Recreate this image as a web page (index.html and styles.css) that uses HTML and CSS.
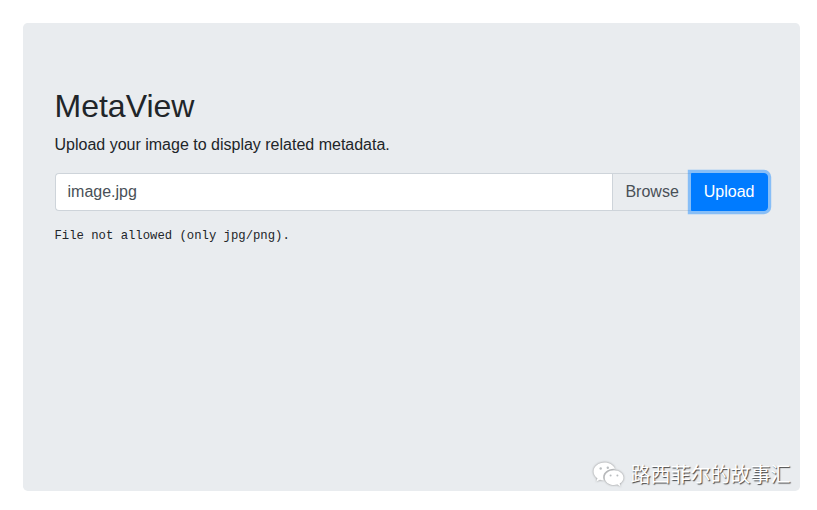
FILE: index.html
```html
<!DOCTYPE html>
<html lang="en">
<head>
  <meta charset="UTF-8">
  <meta name="viewport" content="width=device-width, initial-scale=1.0">
  <title>MetaView</title>
  <link rel="stylesheet" href="styles.css">
</head>
<body>
  <div class="jumbotron">
    <h1>MetaView</h1>
    <p class="lead">Upload your image to display related metadata.</p>
    <form class="upload-form">
      <div class="file-input">
        <span class="file-name">image.jpg</span>
        <span class="browse">Browse</span>
      </div>
      <button class="upload-btn" type="button">Upload</button>
    </form>
    <pre class="result">File not allowed (only jpg/png).</pre>
    <div class="watermark">
      <svg class="wechat" width="34" height="28" viewBox="0 0 34 28">
        <path class="bubble" d="M12.500 1.500C6.400 1.500 1.500 5.500 1.500 10.500C1.500 13.300 3 15.700 5.400 17.300L4.400 20.500L8 18.700C9.300 19.100 10.500 19.300 11.800 19.400C11.400 18.300 11.200 17.200 11.200 16.200C11.200 11.300 15.800 7.700 21.900 7.700C22.300 7.700 22.700 7.700 23 7.800C21.600 4.100 17.400 1.500 12.500 1.500Z"/>
        <path class="bubble" d="M22 9.300C16.800 9.300 12.700 12.700 12.700 16.700C12.700 20.700 16.800 24.100 22 24.100C23.200 24.100 24.300 23.900 25.400 23.600L28.500 25.400L27.700 22.500C30 21.100 31.500 19 31.500 16.700C31.500 12.700 27.200 9.300 22 9.300Z"/>
        <circle class="eye" cx="8.700" cy="7.500" r="1.200"/>
        <circle class="eye" cx="15.800" cy="6.800" r="1.200"/>
        <circle class="eye" cx="18.600" cy="14.500" r="1"/>
        <circle class="eye" cx="25.400" cy="14.500" r="1"/>
      </svg>
      <span class="watermark-text">路西菲尔的故事汇</span>
    </div>
  </div>
</body>
</html>
```

FILE: styles.css
```css
html, body {
  height: 100%;
}
body {
  margin: 0;
  padding: 23px 17.5px 19.5px 22.5px;
  box-sizing: border-box;
  overflow: hidden;
  background-color: #fff;
  color: #212529;
  font-family: "Liberation Sans", Arial, sans-serif;
  font-size: 16px;
  line-height: 1.5;
}
.jumbotron {
  position: relative;
  height: 100%;
  box-sizing: border-box;
  padding: 64px 32px;
  background-color: #e9ecef;
  border-radius: 4.8px;
}
h1 {
  margin: 0 0 8px;
  font-size: 32px;
  font-weight: 400;
  line-height: 1.2;
}
.lead {
  margin: 0 0 16px;
}
.upload-form {
  display: flex;
}
.file-input {
  flex: 1;
  display: flex;
  height: 38px;
  box-sizing: border-box;
  background-color: #fff;
  border: 1px solid #ced4da;
  border-right: none;
  border-radius: 4px 0 0 4px;
  color: #495057;
}
.file-name {
  flex: 1;
  padding: 6px 12px;
}
.browse {
  padding: 6px 12px;
  background-color: #e9ecef;
  border-left: 1px solid #ced4da;
}
.upload-btn {
  position: relative;
  height: 38px;
  padding: 6px 12px;
  background-color: #007bff;
  border: 1px solid #007bff;
  border-radius: 0 4px 4px 0;
  box-shadow: 0 0 0 3.2px rgba(38, 143, 255, 0.5);
  color: #fff;
  font-family: inherit;
  font-size: 16px;
  line-height: 1.5;
}
.result {
  margin: 16px 0 0;
  font-family: "Liberation Mono", "Courier New", monospace;
  font-size: 12.25px;
  line-height: 18px;
}
.watermark {
  position: absolute;
  right: 9px;
  bottom: 1px;
  display: flex;
  align-items: center;
  gap: 5px;
}
.wechat {
  display: block;
  filter: drop-shadow(0 0 1px rgba(90, 90, 90, 0.7));
}
.bubble {
  fill: #fff;
}
.eye {
  fill: #b9bdc0;
}
.watermark-text {
  color: #fff;
  font-family: "Liberation Sans", "Noto Sans CJK SC", sans-serif;
  font-size: 20px;
  line-height: 30px;
  text-shadow: 1px 1px 1px #444;
}
```
